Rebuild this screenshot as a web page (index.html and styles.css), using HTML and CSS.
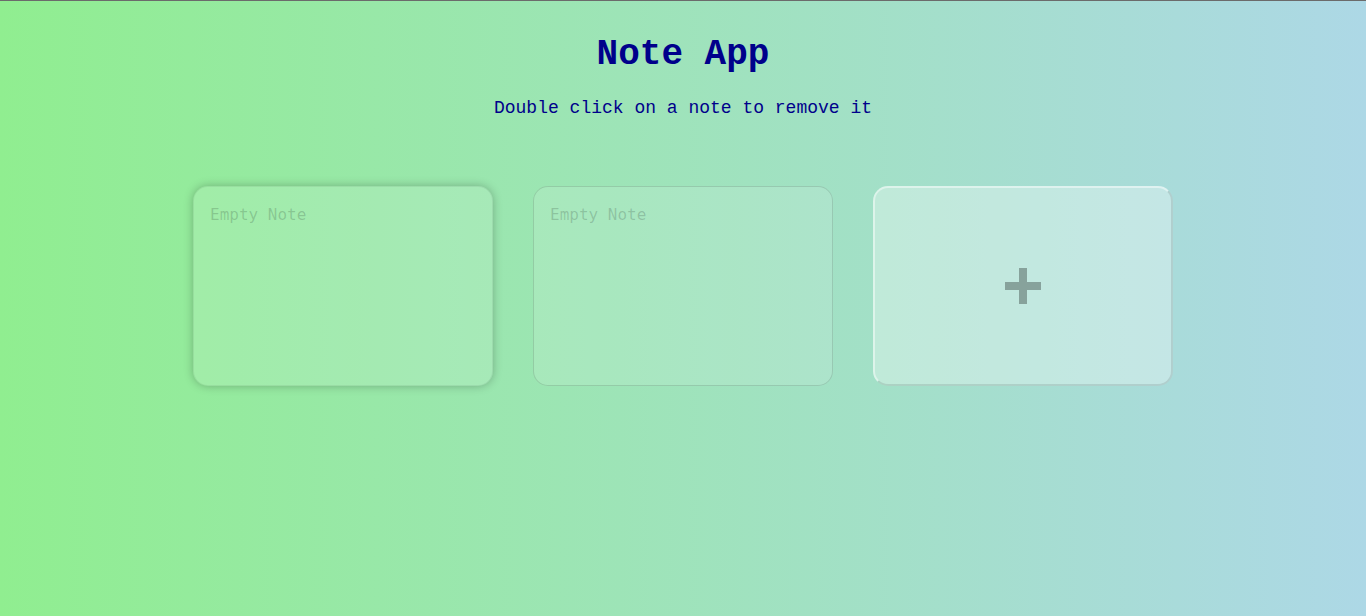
FILE: index.html
```html
<!DOCTYPE html>
<html lang="en">
<head>
<meta charset="utf-8">
<title>Note App</title>
<link rel="stylesheet" href="styles.css">
</head>
<body>
  <h1 class="title">Note App</h1>
  <p class="subtitle">Double click on a note to remove it</p>
  <div class="notes">
    <textarea class="note note-active" placeholder="Empty Note"></textarea>
    <textarea class="note" placeholder="Empty Note"></textarea>
    <button class="add-btn" aria-label="Add note">
      <svg width="36" height="36" viewBox="0 0 36 36" aria-hidden="true">
        <path d="M14 0h8v14h14v8H22v14h-8V22H0v-8h14z" fill="rgba(0,0,0,0.3)"/>
      </svg>
    </button>
  </div>
</body>
</html>
```

FILE: styles.css
```css
html, body {
  margin: 0;
  padding: 0;
}

body {
  min-height: 616px;
  box-sizing: border-box;
  border-top: 1px solid #6b6b6b;
  background: linear-gradient(to right, #90ee90, #add8e6);
  font-family: "Courier New", Courier, "Nimbus Mono PS", "Nimbus Mono L", FreeMono, "Liberation Mono", monospace;
}

.title {
  margin: 0;
  padding-top: 33px;
  text-align: center;
  font-size: 36px;
  line-height: 41px;
  font-weight: bold;
  color: #00008b;
}

.subtitle {
  margin: 23px 0 0;
  text-align: center;
  font-size: 18px;
  line-height: 20px;
  color: #00008b;
}

.notes {
  margin-top: 68px;
  display: flex;
  justify-content: center;
  gap: 40px;
}

.note {
  width: 300px;
  height: 200px;
  box-sizing: border-box;
  padding: 18px 16px 16px;
  border: 1px solid rgba(0, 0, 0, 0.12);
  border-radius: 15px;
  background: rgba(255, 255, 255, 0.12);
  font-family: "DejaVu Sans Mono", monospace;
  font-size: 16px;
  resize: none;
  outline: none;
  color: #333;
}

.note::placeholder {
  color: rgba(0, 0, 0, 0.17);
}

.note-active {
  border-color: rgba(0, 0, 0, 0.06);
  box-shadow: 0 0 10px rgba(0, 0, 0, 0.25);
}

.add-btn {
  width: 300px;
  height: 200px;
  box-sizing: border-box;
  display: flex;
  align-items: center;
  justify-content: center;
  border-radius: 15px;
  border: 2px solid;
  border-color: rgba(255, 255, 255, 0.45) rgba(0, 0, 0, 0.1) rgba(0, 0, 0, 0.1) rgba(255, 255, 255, 0.45);
  background: rgba(255, 255, 255, 0.32);
  padding: 0;
  cursor: pointer;
}
```
